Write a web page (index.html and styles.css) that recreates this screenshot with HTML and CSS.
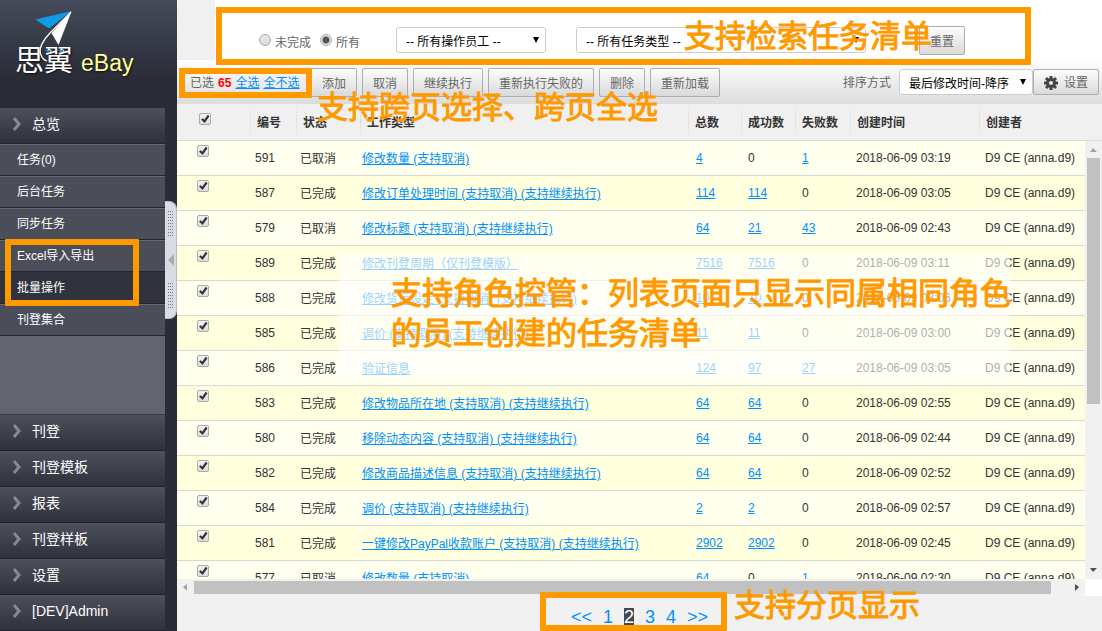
FILE: index.html
```html
<!DOCTYPE html>
<html lang="zh-CN">
<head>
  <meta charset="UTF-8">
  <meta name="viewport" content="width=device-width, initial-scale=1.0">
  <title>思翼 eBay</title>
  <link rel="stylesheet" href="styles.css">
</head>
<body>
  <aside class="sidebar">
    <div class="logo">
      <span class="logo-cn">思翼</span>
      <span class="logo-en">eBay</span>
      <svg class="logo-plane" width="76" height="76" viewBox="0 0 76 76">
        <path d="M35.500 19.500L71.500 11L49 28.500Z" fill="#0f9be8"/>
        <path d="M71.500 11.500L58.500 45L51.500 33Z" fill="#fff"/>
        <path d="M71 12L50 33C43 40 38 49 41 55C42 58 44 60 47 61" fill="none" stroke="#fff" stroke-width="1.300"/>
        <path d="M45 50L51 50L48 52.500ZM58 50L64 50L61 52.500Z" fill="#0f9be8"/>
      </svg>
    </div>
    <nav class="nav">
      <a class="nav-head" href="#"><svg class="arrow" viewBox="0 0 10 14"><path d="M2 1L7 7L2 13"/></svg>总览</a>
      <div class="nav-sub">
        <a href="#">任务(0)</a>
        <a href="#">后台任务</a>
        <a href="#">同步任务</a>
        <a href="#">Excel导入导出</a>
        <a class="current" href="#">批量操作</a>
        <a href="#">刊登集合</a>
      </div>
      <a class="nav-head" href="#"><svg class="arrow" viewBox="0 0 10 14"><path d="M2 1L7 7L2 13"/></svg>刊登</a>
      <a class="nav-head" href="#"><svg class="arrow" viewBox="0 0 10 14"><path d="M2 1L7 7L2 13"/></svg>刊登模板</a>
      <a class="nav-head" href="#"><svg class="arrow" viewBox="0 0 10 14"><path d="M2 1L7 7L2 13"/></svg>报表</a>
      <a class="nav-head" href="#"><svg class="arrow" viewBox="0 0 10 14"><path d="M2 1L7 7L2 13"/></svg>刊登样板</a>
      <a class="nav-head" href="#"><svg class="arrow" viewBox="0 0 10 14"><path d="M2 1L7 7L2 13"/></svg>设置</a>
      <a class="nav-head" href="#"><svg class="arrow" viewBox="0 0 10 14"><path d="M2 1L7 7L2 13"/></svg>[DEV]Admin</a>
    </nav>
    <button class="handle" type="button" aria-label="收起"><i class="grip"></i><i class="handle-arrow"></i><i class="grip"></i></button>
  </aside>

  <main class="main">
    <form class="filter">
      <label class="radio"><input type="radio" name="scope"><span>未完成</span></label>
      <label class="radio"><input type="radio" name="scope" checked><span>所有</span></label>
      <span class="select staff"><select aria-label="操作员工"><option>-- 所有操作员工 --</option></select></span>
      <span class="select kind"><select aria-label="任务类型"><option>-- 所有任务类型 --</option></select></span>
      <button class="btn reset" type="button">重置</button>
    </form>

    <div class="toolbar">
      <div class="selected">已选 <b>65</b> <a href="#">全选</a> <a href="#">全不选</a></div>
      <div class="actions">
        <button class="btn" type="button">添加</button>
        <button class="btn" type="button">取消</button>
        <button class="btn" type="button">继续执行</button>
        <button class="btn" type="button">重新执行失败的</button>
        <button class="btn" type="button">删除</button>
        <button class="btn" type="button">重新加载</button>
      </div>
      <label class="sort-label" for="sort">排序方式</label>
      <span class="select sort"><select id="sort"><option>最后修改时间-降序</option></select></span>
      <button class="btn config" type="button">
        <svg width="14" height="14" viewBox="0 0 14 14"><g stroke="#444" stroke-width="3"><path d="M7 0V14M0 7H14M2 2L12 12M12 2L2 12"/></g><circle cx="7" cy="7" r="5" fill="#444"/><circle cx="7" cy="7" r="2" fill="#eee"/></svg>设置
      </button>
    </div>

    <section class="list">
      <div class="table-wrap">
        <table class="tasks">
          <colgroup>
            <col class="c-check"><col class="c-id"><col class="c-state"><col><col class="c-total"><col class="c-ok"><col class="c-fail"><col class="c-time"><col class="c-owner">
          </colgroup>
          <thead>
            <tr><th><input type="checkbox" checked aria-label="全选"></th><th>编号</th><th>状态</th><th>工作类型</th><th>总数</th><th>成功数</th><th>失败数</th><th>创建时间</th><th>创建者</th></tr>
          </thead>
          <tbody>
            <tr><td><input type="checkbox" checked aria-label="591"></td><td>591</td><td>已取消</td><td><a href="#">修改数量 (支持取消)</a></td><td><a href="#">4</a></td><td>0</td><td><a href="#">1</a></td><td>2018-06-09 03:19</td><td>D9 CE (anna.d9)</td></tr>
            <tr><td><input type="checkbox" checked aria-label="587"></td><td>587</td><td>已完成</td><td><a href="#">修改订单处理时间 (支持取消) (支持继续执行)</a></td><td><a href="#">114</a></td><td><a href="#">114</a></td><td>0</td><td>2018-06-09 03:05</td><td>D9 CE (anna.d9)</td></tr>
            <tr><td><input type="checkbox" checked aria-label="579"></td><td>579</td><td>已取消</td><td><a href="#">修改标题 (支持取消) (支持继续执行)</a></td><td><a href="#">64</a></td><td><a href="#">21</a></td><td><a href="#">43</a></td><td>2018-06-09 02:43</td><td>D9 CE (anna.d9)</td></tr>
            <tr><td><input type="checkbox" checked aria-label="589"></td><td>589</td><td>已完成</td><td><a href="#">修改刊登周期（仅刊登模版）</a></td><td><a href="#">7516</a></td><td><a href="#">7516</a></td><td>0</td><td>2018-06-09 03:11</td><td>D9 CE (anna.d9)</td></tr>
            <tr><td><input type="checkbox" checked aria-label="588"></td><td>588</td><td>已完成</td><td><a href="#">修改货运设定 (支持取消) (支持继续执行)</a></td><td><a href="#">10</a></td><td><a href="#">10</a></td><td>0</td><td>2018-06-09 03:06</td><td>D9 CE (anna.d9)</td></tr>
            <tr><td><input type="checkbox" checked aria-label="585"></td><td>585</td><td>已完成</td><td><a href="#">调价 (支持取消) (支持继续执行)</a></td><td><a href="#">11</a></td><td><a href="#">11</a></td><td>0</td><td>2018-06-09 03:00</td><td>D9 CE (anna.d9)</td></tr>
            <tr><td><input type="checkbox" checked aria-label="586"></td><td>586</td><td>已完成</td><td><a href="#">验证信息</a></td><td><a href="#">124</a></td><td><a href="#">97</a></td><td><a href="#">27</a></td><td>2018-06-09 03:05</td><td>D9 CE (anna.d9)</td></tr>
            <tr><td><input type="checkbox" checked aria-label="583"></td><td>583</td><td>已完成</td><td><a href="#">修改物品所在地 (支持取消) (支持继续执行)</a></td><td><a href="#">64</a></td><td><a href="#">64</a></td><td>0</td><td>2018-06-09 02:55</td><td>D9 CE (anna.d9)</td></tr>
            <tr><td><input type="checkbox" checked aria-label="580"></td><td>580</td><td>已完成</td><td><a href="#">移除动态内容 (支持取消) (支持继续执行)</a></td><td><a href="#">64</a></td><td><a href="#">64</a></td><td>0</td><td>2018-06-09 02:44</td><td>D9 CE (anna.d9)</td></tr>
            <tr><td><input type="checkbox" checked aria-label="582"></td><td>582</td><td>已完成</td><td><a href="#">修改商品描述信息 (支持取消) (支持继续执行)</a></td><td><a href="#">64</a></td><td><a href="#">64</a></td><td>0</td><td>2018-06-09 02:52</td><td>D9 CE (anna.d9)</td></tr>
            <tr><td><input type="checkbox" checked aria-label="584"></td><td>584</td><td>已完成</td><td><a href="#">调价 (支持取消) (支持继续执行)</a></td><td><a href="#">2</a></td><td><a href="#">2</a></td><td>0</td><td>2018-06-09 02:57</td><td>D9 CE (anna.d9)</td></tr>
            <tr><td><input type="checkbox" checked aria-label="581"></td><td>581</td><td>已完成</td><td><a href="#">一键修改PayPal收款账户 (支持取消) (支持继续执行)</a></td><td><a href="#">2902</a></td><td><a href="#">2902</a></td><td>0</td><td>2018-06-09 02:45</td><td>D9 CE (anna.d9)</td></tr>
            <tr><td><input type="checkbox" checked aria-label="577"></td><td>577</td><td>已取消</td><td><a href="#">修改数量 (支持取消)</a></td><td><a href="#">64</a></td><td>0</td><td><a href="#">1</a></td><td>2018-06-09 02:30</td><td>D9 CE (anna.d9)</td></tr>
          </tbody>
        </table>
      </div>
      <div class="vbar"><i class="tri up"></i><div class="vtrack"><div class="vthumb"></div></div><i class="tri down"></i></div>
      <div class="hbar"><i class="tri left"></i><div class="htrack"><div class="hthumb"></div></div><i class="tri right"></i></div>
      <div class="corner"></div>
    </section>

    <footer class="pager">
      <a href="#">&lt;&lt;</a><a href="#">1</a><span class="on">2</span><a href="#">3</a><a href="#">4</a><a href="#">&gt;&gt;</a>
    </footer>
  </main>

  <!-- notes over the page -->
  <div class="frame frame-search"></div>
  <div class="frame frame-selected"></div>
  <div class="frame frame-menu"></div>
  <div class="frame frame-pager"></div>
  <p class="note note-search">支持检索任务清单</p>
  <p class="note note-selected">支持跨页选择、跨页全选</p>
  <p class="note note-pager">支持分页显示</p>
  <div class="veil"><p class="note">支持角色控管：列表页面只显示同属相同角色<br>的员工创建的任务清单</p></div>
</body>
</html>
```

FILE: styles.css
```css
* {
  box-sizing: border-box;
}

body {
  position: relative;
  display: flex;
  height: 100vh;
  margin: 0;
  overflow: hidden;
  font: 12px/18px "Liberation Sans", "Noto Sans CJK SC", sans-serif;
  color: #333;
  background: #f0f0f0;
}

a {
  color: #0090ff;
}

input,
select,
button {
  margin: 0;
  font: inherit;
}

/* Sidebar */
.sidebar {
  position: relative;
  display: flex;
  flex-direction: column;
  flex: none;
  width: 177px;
  padding-right: 12px;
  background: linear-gradient(#454b5a, #292c37 80px);
}

.logo {
  position: relative;
  display: flex;
  align-items: baseline;
  gap: 8px;
  height: 108px;
  padding: 41px 0 0 15px;
  line-height: 40px;
  white-space: nowrap;
  text-shadow: 1px 1px 2px #111;
}

.logo-cn {
  font-size: 29px;
  color: #fff;
}

.logo-en {
  font-size: 23px;
  color: #ffff99;
}

.logo-plane {
  position: absolute;
  top: 0;
  left: 0;
}

.nav {
  display: flex;
  flex-direction: column;
  flex: 1;
}

.nav a {
  color: #fff;
  text-decoration: none;
}

.nav-head {
  display: flex;
  align-items: center;
  flex: none;
  gap: 10px;
  height: 36px;
  padding: 0 0 4px 12px;
  font-size: 14px;
  background: linear-gradient(#4c505b, #2f323d);
  border-bottom: 1px solid #22252e;
}

.arrow {
  width: 10px;
  height: 14px;
  fill: none;
  stroke: #868993;
  stroke-width: 3;
}

.nav-sub {
  flex: 1;
  background: #626570;
  border-bottom: 1px solid #383b46;
}

.nav-sub a {
  display: block;
  height: 32px;
  padding: 6px 17px;
  background: #4b4e59;
  border-top: 1px solid #666974;
  border-bottom: 1px solid #22252e;
}

.nav-sub .current {
  background: #30333e;
  border-top-color: #30333e;
}

.handle {
  position: absolute;
  top: 201px;
  right: 0;
  display: flex;
  flex-direction: column;
  align-items: center;
  justify-content: center;
  gap: 17px;
  width: 12px;
  height: 118px;
  padding: 0;
  background: #d9dce3;
  border: 1px solid #b9bcc4;
  border-left: 0;
  border-radius: 0 8px 8px 0;
}

.grip {
  width: 5px;
  height: 26px;
  background:
    linear-gradient(transparent 1px, #d9dce3 1px) 0 0 / 100% 3px,
    linear-gradient(90deg, #777 1px, transparent 1px) 0 0 / 2px 100%;
}

.handle-arrow {
  border: 6px solid transparent;
  border-right-color: #aaa;
  border-left: 0;
}

/* Search form */
.main {
  display: flex;
  flex-direction: column;
  flex: 1;
  min-width: 0;
}

.filter {
  display: flex;
  align-items: center;
  flex: none;
  height: 60px;
  padding: 20px 0 0 44px;
  margin-left: 38px;
  background: #fff;
  color: #666;
}

.radio {
  display: flex;
  align-items: center;
  gap: 4px;
  margin-right: 9px;
}

.radio span {
  padding-top: 5px;
}

.radio input {
  width: 12px;
  height: 12px;
  appearance: none;
  background: linear-gradient(#e8e8e8, #ddd);
  border: 1px solid #aaa;
  border-radius: 50%;
}

.radio input:checked {
  background: radial-gradient(circle, #555 3px, #e4e4e4 4px);
}

.select {
  position: relative;
  flex: none;
}

.select::after {
  position: absolute;
  top: 10px;
  right: 7px;
  width: 6px;
  height: 6px;
  content: "";
  background: #000;
  clip-path: polygon(0 0, 100% 0, 50% 100%);
  pointer-events: none;
}

.select select {
  width: 100%;
  height: 26px;
  padding: 3px 9px 0;
  color: #000;
  appearance: none;
  background: #fff;
  border: 1px solid #ccc;
  border-radius: 3px;
}

.staff {
  width: 150px;
  margin-left: 27px;
}

.kind {
  width: 290px;
  margin-left: 30px;
}

.btn {
  height: 29px;
  padding: 3px 10px 0;
  color: #666;
  white-space: nowrap;
  background: linear-gradient(#fdfdfd, #d9d9d9);
  border: 1px solid #aaadb3;
  border-radius: 2px;
}

.reset {
  margin-left: 53px;
}

/* Toolbar */
.toolbar {
  display: flex;
  align-items: center;
  flex: none;
  height: 44px;
  padding: 0 3px 0 13px;
  color: #666;
  background: linear-gradient(#fff, #dcdcdc);
}

.selected {
  display: flex;
  gap: 4px;
  width: 121px;
  padding-top: 2px;
  white-space: nowrap;
}

.selected b {
  color: #f00;
}

.actions {
  display: flex;
  gap: 5px;
}

.sort-label {
  padding-top: 2px;
  margin: 0 8px 0 auto;
}

.sort {
  width: 134px;
}

.config {
  display: flex;
  align-items: center;
  gap: 6px;
  height: 26px;
  padding-top: 1px;
}

/* Task list */
.list {
  display: grid;
  grid-template-rows: 37px 1fr 17px;
  grid-template-columns: 1fr 17px;
  flex: 1;
  min-height: 0;
  background: linear-gradient(#d9d9d9, #d9d9d9) 0 36px / 100% 1px no-repeat;
}

.table-wrap {
  grid-row: 1 / 3;
  grid-column: 1;
  min-height: 0;
  overflow: hidden;
}

.tasks {
  width: 100%;
  table-layout: fixed;
  border-spacing: 0;
  white-space: nowrap;
}

.c-check { width: 73px; }
.c-id { width: 46px; }
.c-state { width: 64px; }
.c-total { width: 53px; }
.c-ok { width: 54px; }
.c-fail { width: 55px; }
.c-time { width: 129px; }
.c-owner { width: 106px; }

.tasks th {
  height: 37px;
  padding: 1px 0 0 7px;
  text-align: left;
  border-bottom: 1px solid #d9d9d9;
  background: linear-gradient(#f0f0f0, #ddd 50%, #f0f0f0) 0 0 / 1px 34px no-repeat;
}

.tasks th:first-child {
  padding: 0 0 6px 22px;
  background: none;
}

.tasks td {
  height: 35px;
  padding: 0 0 0 7px;
  background: #ffffee;
  border-bottom: 1px solid #d9d9d9;
}

.tasks tr:nth-child(even) td {
  background: #ffffdd;
}

.tasks td:first-child {
  padding: 4px 0 0 20px;
  vertical-align: top;
}

.tasks td:nth-child(2) {
  padding-left: 5px;
}

.tasks td:nth-child(3) {
  padding: 2px 0 0 4px;
}

.tasks td:nth-child(4) {
  padding: 2px 0 0 2px;
}

.tasks td:nth-child(5) {
  padding-left: 8px;
}

.tasks td:nth-child(8),
.tasks td:nth-child(9) {
  padding-left: 6px;
}

.tasks input {
  display: block;
  width: 12px;
  height: 12px;
  appearance: none;
  background: linear-gradient(#f2f2f2, #ddd);
  border: 1px solid #aaa;
  border-radius: 2px;
}

.tasks input:checked::after {
  display: block;
  width: 10px;
  height: 10px;
  content: "";
  background: #333;
  clip-path: polygon(10% 55%, 28% 42%, 42% 58%, 78% 8%, 95% 22%, 46% 90%);
}

/* Scrollbars */
.vbar {
  display: flex;
  grid-row: 2;
  grid-column: 2;
  flex-direction: column;
  align-items: center;
  background: #f1f1f1;
}

.vtrack {
  flex: 1;
  width: 13px;
}

.vthumb {
  height: 61%;
  background: #c1c1c1;
}

.hbar {
  display: flex;
  grid-row: 3;
  grid-column: 1;
  align-items: center;
  background: #f1f1f1;
}

.htrack {
  flex: 1;
}

.hthumb {
  width: 98%;
  height: 13px;
  background: #c1c1c1;
}

.corner {
  grid-row: 3;
  grid-column: 2;
  background: #fff;
}

.tri {
  flex: none;
  width: 17px;
  height: 17px;
  background: #505050;
}

.up {
  background: #a3a3a3;
  clip-path: polygon(5px 11px, 8px 7px, 12px 11px);
}

.down {
  clip-path: polygon(5px 6px, 12px 6px, 8px 10px);
}

.left {
  background: #a3a3a3;
  clip-path: polygon(10px 5px, 6px 8px, 10px 12px);
}

.right {
  clip-path: polygon(7px 5px, 11px 8px, 7px 12px);
}

/* Pager */
.pager {
  display: flex;
  justify-content: center;
  flex: none;
  gap: 11px;
  height: 35px;
  padding-top: 12px;
  font-size: 18px;
  line-height: 18px;
  background: #f1f1f1;
}

.pager a {
  text-decoration: none;
}

.pager .on {
  height: 17px;
  color: #fff;
  background: #444853;
}

/* Notes */
.frame {
  position: absolute;
  border: 6px solid #ff9900;
  border-radius: 1px;
  pointer-events: none;
}

.frame-search {
  top: 7px;
  left: 216px;
  width: 815px;
  height: 58px;
}

.frame-selected {
  top: 68px;
  left: 179px;
  width: 133px;
  height: 30px;
}

.frame-menu {
  top: 239px;
  left: 5px;
  width: 134px;
  height: 67px;
}

.frame-pager {
  top: 592px;
  left: 540px;
  width: 187px;
  height: 39px;
}

.note {
  margin: 0;
  font: 31px/40px "Noto Sans CJK SC", sans-serif;
  color: #ff9900;
  white-space: nowrap;
  -webkit-text-stroke: 1px #ff9900;
}

.note-search,
.note-selected,
.note-pager {
  position: absolute;
}

.note-search {
  top: 14px;
  left: 684px;
}

.note-selected {
  top: 85px;
  left: 317px;
}

.note-pager {
  top: 583px;
  left: 734px;
}

.veil {
  position: absolute;
  top: 253px;
  left: 339px;
  width: 671px;
  height: 124px;
  padding: 18px 0 0 52px;
  background: rgba(255, 255, 255, 0.6);
}
```
